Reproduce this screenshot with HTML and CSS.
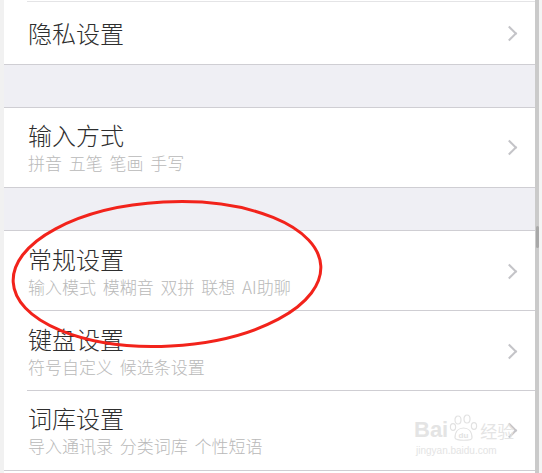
FILE: index.html
```html
<!DOCTYPE html>
<html lang="zh-CN">
<head>
    <meta charset="UTF-8">
    <meta name="viewport" content="width=device-width, initial-scale=1.0">
    <title>设置</title>
    <link rel="stylesheet" href="styles.css">
</head>
<body>
    <div class="screen">
        <div class="edge"></div>
        <div class="list">
            <div class="row-tail"></div>
            <div class="row single">
                <div class="text">
                    <div class="title">隐私设置</div>
                </div>
                <span class="chevron"></span>
            </div>
            <div class="gap"></div>
            <div class="row">
                <div class="text">
                    <div class="title">输入方式</div>
                    <div class="sub">拼音 五笔 笔画 手写</div>
                </div>
                <span class="chevron"></span>
            </div>
            <div class="gap"></div>
            <div class="row inset">
                <div class="text">
                    <div class="title">常规设置</div>
                    <div class="sub">输入模式 模糊音 双拼 联想 AI助聊</div>
                </div>
                <span class="chevron"></span>
            </div>
            <div class="row inset">
                <div class="text">
                    <div class="title">键盘设置</div>
                    <div class="sub">符号自定义 候选条设置</div>
                </div>
                <span class="chevron"></span>
            </div>
            <div class="row">
                <div class="text">
                    <div class="title">词库设置</div>
                    <div class="sub">导入通讯录 分类词库 个性短语</div>
                </div>
                <span class="chevron"></span>
            </div>
        </div>
        <div class="scrollbar">
            <div class="thumb"></div>
        </div>
        <div class="tail"></div>

        <!-- red hand-drawn mark round the general settings row -->
        <svg class="mark" width="542" height="473" viewBox="0 0 542 473">
            <ellipse cx="167" cy="274" rx="154" ry="72" fill="none" stroke="#f2231b" stroke-width="3" transform="rotate(-3 167 274)"/>
        </svg>

        <div class="watermark">
            <div class="wm-logo">
                <span>Bai</span>
                <svg class="paw" width="30" height="28" viewBox="0 0 30 28">
                    <g fill="none" stroke="#e2e2e2" stroke-width="1.2">
                        <ellipse cx="9" cy="6" rx="3" ry="4"/>
                        <ellipse cx="18" cy="5" rx="3" ry="4"/>
                        <ellipse cx="4" cy="13" rx="2.6" ry="3.4"/>
                        <ellipse cx="25" cy="12" rx="2.6" ry="3.4"/>
                        <path d="M6 24 C6 17 10 14 14.5 14 C19 14 23 17 23 24 C23 27 6 27 6 24 Z"/>
                    </g>
                    <text x="14.5" y="24" text-anchor="middle" font-size="8" fill="#e2e2e2" font-family="Liberation Sans, sans-serif">du</text>
                </svg>
                <span class="wm-cn">经验</span>
            </div>
            <div class="wm-url">jingyan.baidu.com</div>
        </div>
    </div>
</body>
</html>
```

FILE: styles.css
```css
body {
    margin: 0;
    background-color: #fff;
    font-family: "Noto Sans CJK SC", "Noto Sans", sans-serif;
}

.screen {
    position: relative;
    display: flex;
    width: 542px;
    height: 473px;
    overflow: hidden;
}

.edge {
    width: 4px;
    background-color: #f1f1f1;
}

.list {
    flex: 1;
    display: flex;
    flex-direction: column;
}

.row-tail {
    height: 1px;
    margin-left: 23px;
    border-bottom: 1px solid #e4e4e6;
}

.row {
    display: flex;
    align-items: center;
    height: 79px;
    padding: 0 16px 0 24px;
    border-bottom: 1px solid #cfced3;
    background-color: #fff;
}

.row.single {
    height: 62px;
}

.row.inset {
    position: relative;
    border-bottom: none;
    height: 80px;
    box-sizing: border-box;
}

.row.inset::after {
    content: "";
    position: absolute;
    left: 23px;
    right: 0;
    bottom: 0;
    border-bottom: 1px solid #cfced3;
}

.gap {
    height: 42px;
    background-color: #efeff4;
    border-bottom: 1px solid #cfced3;
}

.text {
    flex: 1;
    display: flex;
    flex-direction: column;
    gap: 1px;
}

.title {
    font-size: 24px;
    font-weight: 300;
    line-height: 30px;
    color: #2e2e2e;
}

.sub {
    font-size: 17px;
    font-weight: 300;
    line-height: 24px;
    color: #b9b9b9;
    word-spacing: 3px;
}

.chevron {
    width: 9px;
    height: 9px;
    margin-right: 4px;
    border-top: 2px solid #c4c4c8;
    border-right: 2px solid #c4c4c8;
    transform: rotate(45deg);
}

.scrollbar {
    width: 4px;
    background-color: #cacaca;
    position: relative;
}

.thumb {
    position: absolute;
    left: 1px;
    top: 226px;
    width: 3px;
    height: 22px;
    background-color: #a8a8a8;
    border-radius: 2px;
}

.tail {
    width: 3px;
    background-color: #f4f4f4;
}

.mark {
    position: absolute;
    left: 0;
    top: 0;
    pointer-events: none;
}

.watermark {
    position: absolute;
    left: 414px;
    top: 414px;
    color: #e4e4e4;
    font-family: "Liberation Sans", sans-serif;
}

.wm-logo {
    display: flex;
    align-items: flex-end;
    font-size: 22px;
    font-weight: bold;
    line-height: 24px;
}

.paw {
    margin: 0 1px;
}

.wm-cn {
    font-family: "Noto Sans CJK SC", sans-serif;
    font-size: 17px;
    font-weight: normal;
    line-height: 22px;
}

.wm-url {
    font-size: 10px;
    line-height: 14px;
    margin-top: 2px;
    padding-left: 2px;
}
```
